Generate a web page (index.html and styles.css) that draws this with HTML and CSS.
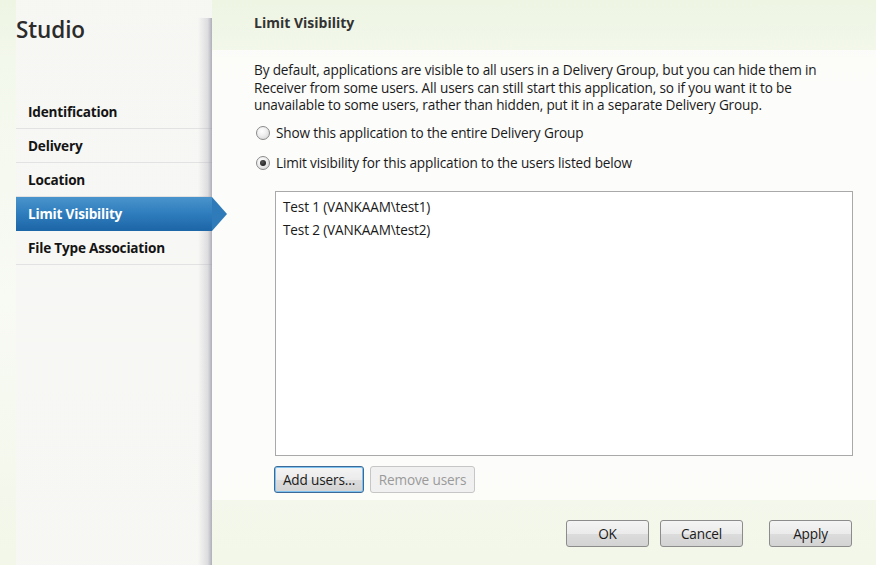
FILE: index.html
```html
<!DOCTYPE html>
<html>
<head>
<meta charset="utf-8">
<link rel="stylesheet" href="styles.css">
</head>
<body>
<div class="app">
  <aside class="sidebar">
    <div class="brand">Studio</div>
    <nav class="nav">
      <div class="nav-item">Identification</div>
      <div class="nav-item">Delivery</div>
      <div class="nav-item">Location</div>
      <div class="nav-item active">Limit Visibility</div>
      <div class="nav-item">File Type Association</div>
    </nav>
  </aside>
  <main class="main">
    <header class="title">Limit Visibility</header>
    <section class="content">
      <p class="intro">By default, applications are visible to all users in a Delivery Group, but you can hide them in Receiver from some users. All users can still start this application, so if you want it to be unavailable to some users, rather than hidden, put it in a separate Delivery Group.</p>
      <label class="radio"><span class="dot"></span>Show this application to the entire Delivery Group</label>
      <label class="radio"><span class="dot checked"></span>Limit visibility for this application to the users listed below</label>
      <div class="users">
        <div class="listbox">
          <div class="user">Test 1 (VANKAAM\test1)</div>
          <div class="user">Test 2 (VANKAAM\test2)</div>
        </div>
        <div class="list-actions">
          <button class="btn focused">Add users...</button>
          <button class="btn disabled">Remove users</button>
        </div>
      </div>
    </section>
    <footer class="footer">
      <button class="btn wide">OK</button>
      <button class="btn wide">Cancel</button>
      <button class="btn wide apply">Apply</button>
    </footer>
  </main>
</div>
</body>
</html>
```
FILE: styles.css
```css
html, body {
  margin: 0;
  padding: 0;
}
body {
  width: 876px;
  height: 565px;
  overflow: hidden;
  font-family: "Open Sans", "Noto Sans", sans-serif;
  color: #1a1a1a;
  background: linear-gradient(180deg, #eef5e3 0px, #f3f8ec 60px, #f8faf4 300px, #f2f7e9 565px);
}
.app {
  display: flex;
  height: 565px;
}
.sidebar {
  width: 212px;
  flex: none;
  position: relative;
  display: flex;
  flex-direction: column;
  background: linear-gradient(90deg, rgba(255,255,255,0) 0, rgba(255,255,255,0) 16px, rgba(247,247,245,0.9) 16px);
}
.sidebar::after {
  content: "";
  position: absolute;
  top: 18px;
  right: 0;
  width: 14px;
  bottom: 0;
  background: linear-gradient(90deg, rgba(180,180,190,0) 0, rgba(170,170,182,0.35) 70%, rgba(150,150,165,0.75) 100%);
}
.brand {
  height: 60px;
  padding: 14px 0 0 16px;
  box-sizing: border-box;
  font-size: 22.5px;
  font-weight: 600;
  color: #2b2b2b;
  letter-spacing: -0.1px;
}
.nav {
  margin-top: 35px;
  margin-left: 16px;
  display: flex;
  flex-direction: column;
}
.nav-item {
  height: 34px;
  box-sizing: border-box;
  padding-left: 12px;
  display: flex;
  align-items: center;
  font-size: 13.6px;
  font-weight: 700;
  color: #141414;
  border-bottom: 1px solid #e2e2e2;
  letter-spacing: -0.2px;
  position: relative;
}
.nav-item.active {
  color: #ffffff;
  background: linear-gradient(180deg, #4a94cc 0%, #2f7dbd 50%, #1d66a8 100%);
  border-bottom-color: #1d66a8;
  z-index: 2;
}
.nav-item.active::after {
  content: "";
  position: absolute;
  right: -15px;
  top: 0;
  width: 0;
  height: 0;
  border-top: 17px solid transparent;
  border-bottom: 17px solid transparent;
  border-left: 15px solid #2f7bba;
}
.main {
  flex: 1;
  display: flex;
  flex-direction: column;
}
.title {
  height: 50px;
  box-sizing: border-box;
  padding: 13px 0 0 42px;
  font-size: 14px;
  font-weight: 700;
  color: #333;
}
.content {
  flex: 1;
  background: rgba(253,253,252,0.85);
  padding: 11px 0 0 42px;
  display: flex;
  flex-direction: column;
}
.intro {
  margin: 0 0 4px 0;
  width: 580px;
  font-size: 13.6px;
  line-height: 17.5px;
  letter-spacing: -0.15px;
}
.radio {
  display: flex;
  align-items: center;
  height: 30px;
  font-size: 13.6px;
  letter-spacing: -0.15px;
  margin-left: 2px;
}
.dot {
  width: 12px;
  height: 12px;
  border-radius: 50%;
  border: 1px solid #8a8a8a;
  background: radial-gradient(circle at 40% 35%, #ffffff 0, #f0f0f0 40%, #d0d0d0 100%);
  margin-right: 6px;
  display: flex;
  align-items: center;
  justify-content: center;
}
.dot.checked::before {
  content: "";
  width: 6px;
  height: 6px;
  border-radius: 50%;
  background: radial-gradient(circle at 40% 35%, #555 0, #111 100%);
}
.users {
  margin: 13px 0 0 21px;
  display: flex;
  flex-direction: column;
}
.listbox {
  width: 578px;
  height: 265px;
  border: 1px solid #a9a9a9;
  background: #ffffff;
  padding: 3px 7px;
  box-sizing: border-box;
}
.user {
  height: 23px;
  display: flex;
  align-items: center;
  font-size: 13.6px;
  letter-spacing: -0.15px;
}
.list-actions {
  display: flex;
  gap: 6px;
  margin-top: 10px;
  margin-left: -1px;
}
.btn {
  height: 27px;
  padding: 0 6px;
  font-family: "Open Sans", "Noto Sans", sans-serif;
  font-size: 13.6px;
  color: #1a1a1a;
  border: 1px solid #8c8c8c;
  border-radius: 3px;
  background: linear-gradient(180deg, #f4f4f4 0%, #ebebeb 50%, #dcdcdc 51%, #d3d3d3 100%);
  letter-spacing: -0.15px;
}
.btn.focused {
  width: 90px;
  border: 1px solid #3b6a99;
  box-shadow: inset 0 0 0 1px #7ec2f0;
}
.btn.disabled {
  width: 105px;
  color: #9a9a9a;
  border-color: #c6c6c6;
  background: #f0f0f0;
}
.footer {
  height: 65px;
  display: flex;
  align-items: flex-start;
  padding: 20px 0 0 354px;
  box-sizing: border-box;
  gap: 11px;
}
.btn.wide {
  width: 83px;
  height: 27px;
  padding: 0;
}
.btn.apply {
  margin-left: 15px;
}
```
